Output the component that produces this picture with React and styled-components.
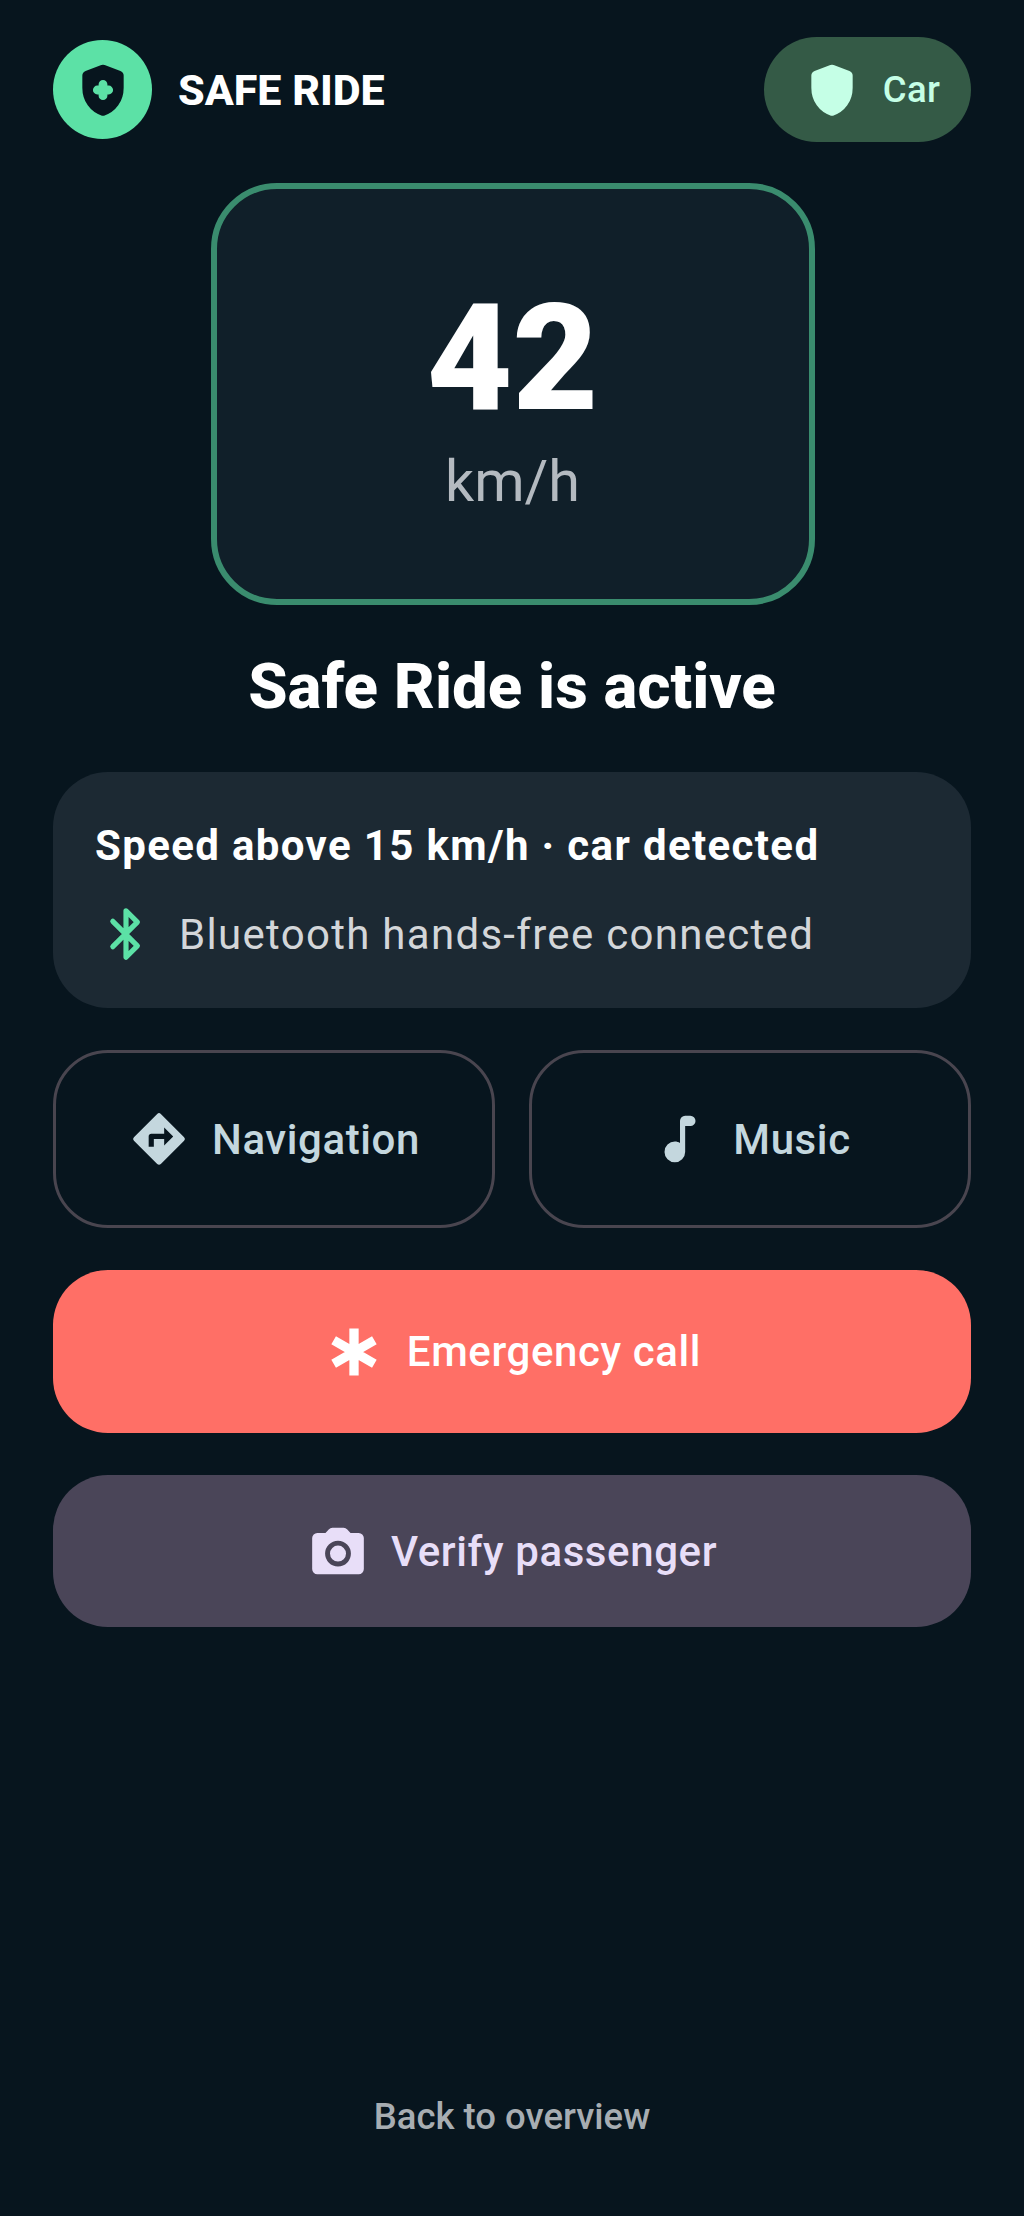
import React from "react";
import styled, { createGlobalStyle } from "styled-components";

const GlobalStyle = createGlobalStyle`
  * {
    box-sizing: border-box;
  }
  html,
  body {
    margin: 0;
    padding: 0;
    background: #07151e;
  }
  body {
    font-family: Roboto, "Noto Sans", sans-serif;
  }
`;

function ShieldIcon({ size = 62, color, plusColor }) {
  return (
    <svg width={size} height={size} viewBox="0 0 24 24">
      <path
        fill={color}
        d="M12 22q-.2 0-.4-.06Q8.2 20.9 6.1 17.95 4 15 4 11.1V6.4q0-.6.35-1.1.35-.5.9-.7l6.1-2.3q.33-.12.65-.12t.65.12l6.1 2.3q.55.2.9.7.35.5.35 1.1v4.7q0 3.9-2.1 6.85-2.1 2.95-5.5 3.99-.2.06-.4.06Z"
      />
      {plusColor && (
        <path
          fill="none"
          stroke={plusColor}
          strokeWidth="3.4"
          strokeLinecap="round"
          d="M12 9.8v4.4M9.8 12h4.4"
        />
      )}
    </svg>
  );
}

function BluetoothIcon() {
  return (
    <svg width="62" height="62" viewBox="0 0 24 24" fill="none" stroke="#5ce1a6" strokeWidth="2" strokeLinecap="round" strokeLinejoin="round">
      <path d="M6.9 7.1l9.5 9.5-4.4 4.4V3l4.4 4.4-9.5 9.5" />
    </svg>
  );
}

function DirectionsIcon() {
  return (
    <svg width="62" height="62" viewBox="0 0 24 24" fill="#c4d7de">
      <path d="M21.71 11.29l-9-9a.996.996 0 00-1.41 0l-9 9a.996.996 0 000 1.41l9 9c.39.39 1.02.39 1.41 0l9-9a.996.996 0 000-1.41zM14 14.5V12h-4v3H8v-4c0-.55.45-1 1-1h5V7.5l3.5 3.5-3.5 3.5z" />
    </svg>
  );
}

function MusicIcon() {
  return (
    <svg width="62" height="62" viewBox="0 0 24 24" fill="#c4d7de">
      <path d="M10 21a4 4 0 1 1 0-8c.74 0 1.42.21 2 .55V5a2 2 0 0 1 2-2h2a2 2 0 0 1 0 4h-2v10a4 4 0 0 1-4 4z" />
    </svg>
  );
}

function EmergencyIcon() {
  return (
    <svg width="62" height="62" viewBox="0 0 24 24" fill="none" stroke="#fff" strokeWidth="3.6">
      <path d="M12 2.9v18.2M4.12 7.45l15.76 9.1M19.88 7.45L4.12 16.55" />
    </svg>
  );
}

function CameraIcon() {
  return (
    <svg width="62" height="62" viewBox="0 0 24 24" fill="#e8def8" fillRule="evenodd">
      <path d="M4 21a2 2 0 0 1-2-2V7a2 2 0 0 1 2-2h3.15L8.4 3.65A2 2 0 0 1 9.85 3h4.3a2 2 0 0 1 1.45.65L16.85 5H20a2 2 0 0 1 2 2v12a2 2 0 0 1-2 2H4zM12 8a5 5 0 1 0 0 10 5 5 0 0 0 0-10zM12 9.9a3.1 3.1 0 1 1 0 6.2 3.1 3.1 0 0 1 0-6.2z" />
    </svg>
  );
}

function App() {
  return (
    <>
      <GlobalStyle />
      <Page>
        <TopBar>
          <Brand>
            <LogoCircle>
              <ShieldIcon color="#07151e" plusColor="#5ce1a6" />
            </LogoCircle>
            <BrandName>SAFE RIDE</BrandName>
          </Brand>
          <ModePill>
            <ShieldIcon color="#c5ffe6" />
            <span>Car</span>
          </ModePill>
        </TopBar>

        <SpeedCard>
          <SpeedValue>42</SpeedValue>
          <SpeedUnit>km/h</SpeedUnit>
        </SpeedCard>

        <Title>Safe Ride is active</Title>

        <InfoCard>
          <InfoHeading>Speed above 15 km/h · car detected</InfoHeading>
          <InfoRow>
            <BluetoothIcon />
            <span>Bluetooth hands-free connected</span>
          </InfoRow>
        </InfoCard>

        <ShortcutRow>
          <ShortcutButton>
            <DirectionsIcon />
            <span>Navigation</span>
          </ShortcutButton>
          <ShortcutButton>
            <MusicIcon />
            <span>Music</span>
          </ShortcutButton>
        </ShortcutRow>

        <ActionButton $bg="#ff6f66" $fg="#fff" $height={163}>
          <EmergencyIcon />
          <span>Emergency call</span>
        </ActionButton>

        <ActionButton $bg="#4a4558" $fg="#e8def8" $height={152}>
          <CameraIcon />
          <span>Verify passenger</span>
        </ActionButton>

        <BackLink>Back to overview</BackLink>
      </Page>
    </>
  );
}

const Page = styled.div`
  width: 1024px;
  height: 2216px;
  padding: 37px 53px 0;
  display: flex;
  flex-direction: column;
  background: #07151e;
`;

const TopBar = styled.div`
  display: flex;
  align-items: center;
  justify-content: space-between;
  height: 105px;
`;

const Brand = styled.div`
  display: flex;
  align-items: center;
  gap: 26px;
`;

const LogoCircle = styled.div`
  width: 99px;
  height: 99px;
  border-radius: 50%;
  background: #5ce1a6;
  display: flex;
  align-items: center;
  justify-content: center;
`;

const BrandName = styled.div`
  font-size: 43px;
  line-height: 48px;
  font-weight: 800;
  color: #fff;
`;

const ModePill = styled.div`
  width: 207px;
  height: 105px;
  padding-left: 6px;
  border-radius: 53px;
  background: #345a46;
  color: #c5ffe6;
  display: flex;
  align-items: center;
  justify-content: center;
  gap: 20px;
  font-size: 36.5px;
  font-weight: 500;
  letter-spacing: 0.3px;
`;

const SpeedCard = styled.div`
  align-self: center;
  width: 604px;
  height: 422px;
  margin-top: 41px;
  margin-left: 1px;
  padding-top: 8px;
  border: 6px solid #3a8c6e;
  border-radius: 66px;
  background: #101f29;
  display: flex;
  flex-direction: column;
  align-items: center;
  justify-content: center;
`;

const SpeedValue = styled.div`
  font-size: 148px;
  line-height: 160px;
  font-weight: 900;
  color: #fff;
`;

const SpeedUnit = styled.div`
  font-size: 57.5px;
  line-height: 72px;
  color: #b4bac0;
  margin-top: 7px;
`;

const Title = styled.h1`
  margin: 46px 0 0;
  font-size: 63.5px;
  line-height: 72px;
  font-weight: 800;
  text-align: center;
  color: #fff;
`;

const InfoCard = styled.div`
  height: 236px;
  margin-top: 49px;
  padding: 50px 42px 0;
  border-radius: 55px;
  background: #1c2933;
  display: flex;
  flex-direction: column;
  gap: 33px;
`;

const InfoHeading = styled.div`
  font-size: 42px;
  line-height: 48px;
  font-weight: 700;
  letter-spacing: 1.35px;
  color: #fff;
`;

const InfoRow = styled.div`
  display: flex;
  align-items: center;
  gap: 22px;
  font-size: 42px;
  letter-spacing: 1.3px;
  color: #d3d6d9;
`;

const ShortcutRow = styled.div`
  display: flex;
  gap: 34px;
  margin-top: 42px;
`;

const ShortcutButton = styled.div`
  flex: 1;
  height: 178px;
  border: 3px solid #49454f;
  border-radius: 55px;
  display: flex;
  align-items: center;
  justify-content: center;
  gap: 22px;
  font-size: 42px;
  font-weight: 500;
  letter-spacing: 0.6px;
  color: #c4d7de;
`;

const ActionButton = styled.div`
  height: ${(props) => props.$height}px;
  margin-top: 42px;
  border-radius: 55px;
  background: ${(props) => props.$bg};
  color: ${(props) => props.$fg};
  display: flex;
  align-items: center;
  justify-content: center;
  gap: 22px;
  font-size: 42px;
  font-weight: 500;
  letter-spacing: 0.6px;
`;

const BackLink = styled.div`
  margin-top: auto;
  margin-bottom: 76px;
  text-align: center;
  font-size: 36.5px;
  line-height: 46px;
  font-weight: 500;
  color: #a7adb2;
`;

export default App;
